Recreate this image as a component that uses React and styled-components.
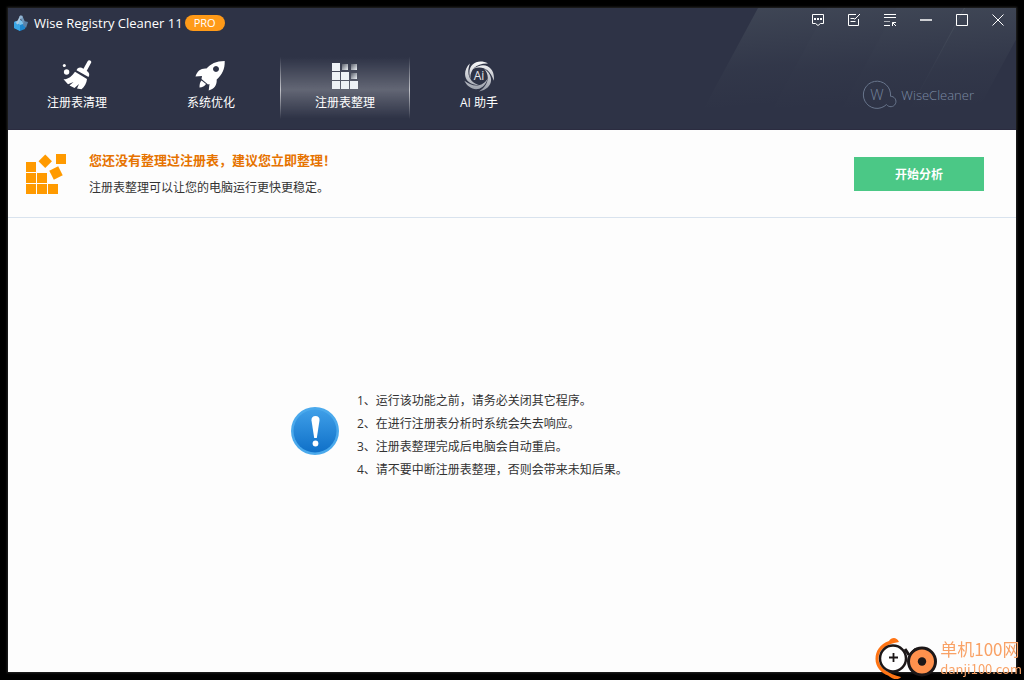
import React, { useState } from 'react';
import styled, { createGlobalStyle } from 'styled-components';

const GlobalStyle = createGlobalStyle`
  * {
    box-sizing: border-box;
  }
  html, body, #root {
    height: 100%;
  }
  body {
    margin: 0;
    background: #000;
    font-family: "Open Sans", "Noto Sans CJK SC", sans-serif;
    font-size: 12px;
    color: #333;
  }
  h1, h2, p, ol {
    margin: 0;
    padding: 0;
  }
  button {
    border: none;
    padding: 0;
    background: none;
    color: inherit;
    font: inherit;
  }
`;

const CubeIcon = () => (
  <svg width="16" height="16" viewBox="0 0 16 16" aria-hidden="true">
    <path d="M1 7l6-2 6 3-1 6-5 2-6-3z" fill="#1d86cf" />
    <path d="M1 7l6-2 6 3-6 2z" fill="#7cc4ee" />
    <path d="M1 7l6 3v6l-6-3z" fill="#3aa5e4" />
    <path d="M8 1L4 9" stroke="#a9c6de" strokeWidth="2" />
    <path d="M8 1l4 9" stroke="#6f97bb" strokeWidth="2.500" />
    <path d="M11 6l4 1-2 6-3-3z" fill="#5b82a8" />
    <circle cx="8" cy="2" r="1.600" fill="#93b4d2" />
  </svg>
);

const BroomIcon = () => (
  <svg width="32" height="32" viewBox="0 0 32 32" fill="#fff" aria-hidden="true">
    <circle cx="3.3" cy="5.5" r="1.5" />
    <circle cx="5.6" cy="12" r="2.7" />
    <path d="M28.3 2.2L24 10" stroke="#fff" strokeWidth="3.8" strokeLinecap="round" />
    <path d="M16.500 8.500c2-1.500 4-1 5.500 0l4.500 3c1.500 1 2.500 3 1 5.500L15.500 10.300z" />
    <path d="M14 11.700L26 19c-.3 4-2.500 8-5.500 10.300L16 28.500l2-4.500-4.500 4-5-2.500 4-3.500-5.500 2.300-4.500-5C7.500 19.300 11 16 14 11.700z" />
  </svg>
);

const RocketIcon = () => (
  <svg width="32" height="32" viewBox="0 0 32 32" fill="#fff" aria-hidden="true">
    <path
      fillRule="evenodd"
      d="M29.700 1C21 1 15.500 4 11.500 8.500 6 8 2 11 .500 16.500l6.500-.5-.5 3L13 24.500l1.500-.5-.8 6.500c5.300-1.500 8.300-5 8-11C27 15 30 9 29.700 1zM21 6a3 3 0 1 0 .01 0z"
    />
    <path d="M6.500 20.500c-1.500 1.500-2 3.500-2 7 3-.3 5-1.300 6.500-3.500z" />
  </svg>
);

const GridIcon = () => (
  <svg width="26" height="26" viewBox="0 0 26 26" fill="#eef2f6" aria-hidden="true">
    <defs>
      <linearGradient id="cell" x1="0" y1="0" x2="1" y2="1">
        <stop offset="0" stopColor="#5a5f6b" />
        <stop offset="1" stopColor="#eef2f6" />
      </linearGradient>
    </defs>
    <path d="M0 0h8v8H0zM0 9h8v8H0zM9 9h8v8H9zM0 18h8v8H0zM9 18h8v8H9zM18 18h8v8h-8z" />
    <rect x="10" y="1" width="6" height="6" fill="url(#cell)" />
    <rect x="19" y="1" width="6" height="6" fill="url(#cell)" />
    <rect x="19" y="10" width="6" height="6" fill="url(#cell)" />
  </svg>
);

const AiIcon = () => (
  <svg width="32" height="32" viewBox="0 0 32 32" aria-hidden="true">
    <defs>
      <linearGradient id="swirl" gradientUnits="userSpaceOnUse" x1="0" y1="0" x2="0" y2="32">
        <stop offset="0" stopColor="#fff" />
        <stop offset="1" stopColor="#9297a3" />
      </linearGradient>
      <mask id="blades">
        {[0, 72, 144, 216, 288].map((angle) => (
          <path
            key={angle}
            transform={`rotate(${angle} 16 16)`}
            d="M25 3.500C15-2 2.500 4 7.500 19.500 6.500 11 12 3 25 3.500z"
            fill="#fff"
          />
        ))}
      </mask>
    </defs>
    <rect width="32" height="32" fill="url(#swirl)" mask="url(#blades)" />
    <text x="16" y="20" textAnchor="middle" fontSize="12" fill="#e4e6ea">Ai</text>
  </svg>
);

const BlocksIcon = () => (
  <svg width="40" height="40" viewBox="0 0 40 40" fill="#ff9a00" aria-hidden="true">
    <path d="M0 8h10v10H0zM0 19h10v10H0zM11 19h10v10H11zM0 30h10v10H0zM11 30h10v10H11zM22 30h10v10H22zM30 0h10v10H30z" />
    <rect x="14.500" y="2.500" width="9.500" height="9.500" transform="rotate(45 19.250 7.250)" />
    <rect x="25" y="14" width="10" height="10" transform="rotate(-27 30 19)" />
  </svg>
);

const AlertIcon = () => (
  <svg width="48" height="48" viewBox="0 0 48 48" aria-hidden="true">
    <defs>
      <linearGradient id="alert" x1="0" y1="0" x2="0" y2="1">
        <stop offset="0" stopColor="#3f9fe8" />
        <stop offset="1" stopColor="#0f70c8" />
      </linearGradient>
    </defs>
    <circle cx="24" cy="24" r="24" fill="#4aa9ec" />
    <circle cx="24" cy="24" r="21.500" fill="url(#alert)" />
    <path d="M24.500 9c2.700 0 4.300 1.600 4 4.500L25.800 31h-2.600L20.500 13.500c-.3-2.900 1.300-4.500 4-4.500z" fill="#fff" />
    <circle cx="24.500" cy="36.500" r="2.900" fill="#fff" />
  </svg>
);

const WiseLogo = () => (
  <svg width="36" height="30" viewBox="0 0 36 30" fill="none" stroke="#68758c" aria-hidden="true">
    <path d="M24.500 24.500A13.600 13.600 0 1 1 28.500 16.200" />
    <path d="M28.500 16.300a5.200 5.200 0 1 1-4 8.200" />
    <text x="15" y="20" textAnchor="middle" fontSize="15" fill="#74829a" stroke="none">W</text>
  </svg>
);

const controls = [
  {
    name: '反馈',
    icon: (
      <>
        <path d="M.5.500h11v9h-3L6 11.500 3.500 9.500h-3z" />
        <path d="M2 5h2M5 5h2M8 5h2" strokeWidth="2" />
      </>
    ),
  },
  {
    name: '注册',
    icon: (
      <>
        <path d="M8 .5H.500v11h10V5" />
        <path d="M2.500 4.500h4M2.500 7.500h5M6.500 5.500L12 0" />
      </>
    ),
  },
  {
    name: '菜单',
    icon: (
      <>
        <path d="M0 .5h12M0 3.500h12M0 11.500h6" />
        <path d="M0 7.500h6" opacity=".6" />
        <path d="M8.500 12V8.500H12M8.500 8.500L12 12" />
      </>
    ),
  },
  { name: '最小化', icon: <path d="M0 6h12" strokeWidth="2" opacity=".75" /> },
  { name: '最大化', icon: <path d="M.5.500h11v11H.500z" /> },
  { name: '关闭', icon: <path d="M.5.500l11 11M11.500.500l-11 11" /> },
];

const tabs = [
  { label: '注册表清理', icon: <BroomIcon /> },
  { label: '系统优化', icon: <RocketIcon /> },
  { label: '注册表整理', icon: <GridIcon /> },
  { label: 'AI 助手', icon: <AiIcon /> },
];

const notes = [
  '1、运行该功能之前，请务必关闭其它程序。',
  '2、在进行注册表分析时系统会失去响应。',
  '3、注册表整理完成后电脑会自动重启。',
  '4、请不要中断注册表整理，否则会带来未知后果。',
];

const App = () => {
  const [active, setActive] = useState('注册表整理');

  return (
    <Desktop lang="zh-CN">
      <GlobalStyle />
      <AppWindow>
        <Header>
          <Streaks viewBox="0 0 314 102" aria-hidden="true">
            <defs>
              <linearGradient id="ray" x1="0.44" y1="0" x2="0.54" y2="0.95">
                <stop offset="0" stopColor="#8f9f9c" stopOpacity=".17" />
                <stop offset="0.6" stopColor="#8f9f9c" stopOpacity=".04" />
                <stop offset="1" stopColor="#8f9f9c" stopOpacity="0" />
              </linearGradient>
            </defs>
            {[56, 125, 194, 262].map((x) => (
              <path key={x} d={`M${x} 0h69l-55 102h-69z`} fill="url(#ray)" />
            ))}
          </Streaks>
          <TitleBar>
            <Brand>
              <CubeIcon />
              <AppName>Wise Registry Cleaner 11</AppName>
              <Badge>PRO</Badge>
            </Brand>
            <Controls>
              {controls.map(({ name, icon }) => (
                <ControlButton key={name} aria-label={name}>
                  <svg width="12" height="12" viewBox="0 0 12 12" fill="none" stroke="#fff">
                    {icon}
                  </svg>
                </ControlButton>
              ))}
            </Controls>
          </TitleBar>
          <NavBar>
            <Tabs>
              {tabs.map(({ label, icon }) => (
                <Tab key={label} $active={active === label} onClick={() => setActive(label)}>
                  <TabIcon>{icon}</TabIcon>
                  {label}
                </Tab>
              ))}
            </Tabs>
            <Company>
              <WiseLogo />
              WiseCleaner
            </Company>
          </NavBar>
        </Header>

        <Summary>
          <BlocksIcon />
          <SummaryText>
            <SummaryTitle>您还没有整理过注册表，建议您立即整理！</SummaryTitle>
            <SummaryNote>注册表整理可以让您的电脑运行更快更稳定。</SummaryNote>
          </SummaryText>
          <StartButton>开始分析</StartButton>
        </Summary>

        <Content>
          <AlertIcon />
          <NoteList>
            {notes.map((note) => (
              <Note key={note}>{note}</Note>
            ))}
          </NoteList>
        </Content>
      </AppWindow>

      <Watermark>
        <svg width="64" height="44" viewBox="0 0 64 44" fill="none" aria-hidden="true">
          <path
            d="M24 6C21 0 16 2 14 5 5 8 .5 15 .5 23S6 37 13 39.500c5 4.500 11 4.500 13 1.500C14 38 3.500 32 3.500 23S10 8 24 6z"
            fill="#ff7414"
          />
          <circle cx="18" cy="22.500" r="13" fill="#fff" stroke="#1c1718" strokeWidth="2.500" />
          <path d="M14 21.500h9M18.500 17v9" stroke="#1c1718" strokeWidth="1.800" />
          <path d="M30 13l4 6M36 18l5-5" stroke="#1c1718" strokeWidth="3" />
          <circle cx="47" cy="25.500" r="13.500" fill="#ff914d" stroke="#1c1718" strokeWidth="3" />
          <circle cx="47" cy="25.500" r="4.200" fill="#1c1718" />
        </svg>
        <WatermarkText>
          <SiteName>单机100网</SiteName>
          <SiteUrl>danji100.com</SiteUrl>
        </WatermarkText>
      </Watermark>
    </Desktop>
  );
};

const Desktop = styled.div`
  min-height: 100%;
  padding: 8px;
  display: flex;
  background: #000;
`;

const AppWindow = styled.main`
  flex: 1;
  display: flex;
  flex-direction: column;
  background: #fdfdfd;
  box-shadow: 0 0 2px 1px #262626;
`;

const Header = styled.header`
  position: relative;
  display: flex;
  flex-direction: column;
  height: 122px;
  background: #2e3346;
  border-bottom: 1px solid #2b2c40;
  color: #fff;
`;

const Streaks = styled.svg`
  position: absolute;
  top: 0;
  right: 0;
  width: 314px;
  height: 102px;
`;

const TitleBar = styled.div`
  position: relative;
  display: flex;
  justify-content: space-between;
  align-items: flex-start;
  height: 30px;
`;

const Brand = styled.div`
  display: flex;
  align-items: center;
  height: 30px;
  padding-left: 5px;
`;

const AppName = styled.h1`
  padding: 0 2px 0 5px;
  font-size: 13px;
  font-weight: 400;
  line-height: 16px;
`;

const Badge = styled.span`
  width: 40px;
  border-radius: 8px;
  background: #ff9a18;
  font-size: 11px;
  line-height: 16px;
  text-align: center;
`;

const Controls = styled.div`
  display: flex;
`;

const ControlButton = styled.button`
  display: flex;
  align-items: center;
  justify-content: center;
  width: 36px;
  height: 24px;
`;

const NavBar = styled.div`
  position: relative;
  flex: 1;
  display: flex;
  justify-content: space-between;
  padding: 12px 42px 0 4px;
`;

const Tabs = styled.nav`
  display: flex;
  gap: 4px;
`;

const Tab = styled.button`
  display: flex;
  flex-direction: column;
  align-items: center;
  width: 130px;
  height: 72px;
  padding-top: 10px;
  line-height: 18px;
  border: 1px solid transparent;
  border-width: 0 1px;
  ${({ $active }) =>
    $active &&
    `
    background: linear-gradient(rgba(255, 255, 255, 0) 10%, rgba(255, 255, 255, 0.25) 55%, rgba(255, 255, 255, 0) 95%);
    border-image: linear-gradient(rgba(255, 255, 255, 0) 10%, rgba(255, 255, 255, 0.6) 55%, rgba(255, 255, 255, 0) 95%) 1;
  `}
`;

const TabIcon = styled.span`
  display: flex;
  align-items: center;
  height: 32px;
  margin-bottom: 2px;
`;

const Company = styled.div`
  display: flex;
  align-items: center;
  gap: 3px;
  height: 30px;
  margin-top: 30px;
  font-size: 13px;
  font-weight: 300;
  color: #7b8aa3;
`;

const Summary = styled.section`
  display: flex;
  align-items: center;
  height: 88px;
  padding: 0 32px 0 18px;
  border-bottom: 1px solid #d9e3ee;
`;

const SummaryText = styled.div`
  flex: 1;
  padding-left: 23px;
`;

const SummaryTitle = styled.h2`
  font-size: 13px;
  line-height: 28px;
  color: #e67300;
`;

const SummaryNote = styled.p`
  line-height: 28px;
`;

const StartButton = styled.button`
  width: 130px;
  height: 34px;
  background: #4bc886;
  color: #fff;
  font-weight: 700;
`;

const Content = styled.section`
  flex: 1;
  display: flex;
  align-items: flex-start;
  gap: 18px;
  padding: 171px 16px 0 283px;

  svg {
    flex: none;
    margin-top: 18px;
  }
`;

const NoteList = styled.ol`
  list-style: none;
`;

const Note = styled.li`
  line-height: 23px;
`;

const Watermark = styled.div`
  position: fixed;
  right: 2px;
  bottom: 0;
  display: flex;
  align-items: center;
  gap: 1px;
  color: #f9a266;
`;

const WatermarkText = styled.div`
  display: flex;
  flex-direction: column;
  font-family: "Noto Sans CJK SC", sans-serif;
  white-space: nowrap;
`;

const SiteName = styled.span`
  font-size: 17px;
  line-height: 22px;
`;

const SiteUrl = styled.span`
  font-size: 13px;
  line-height: 18px;
`;

export default App;
